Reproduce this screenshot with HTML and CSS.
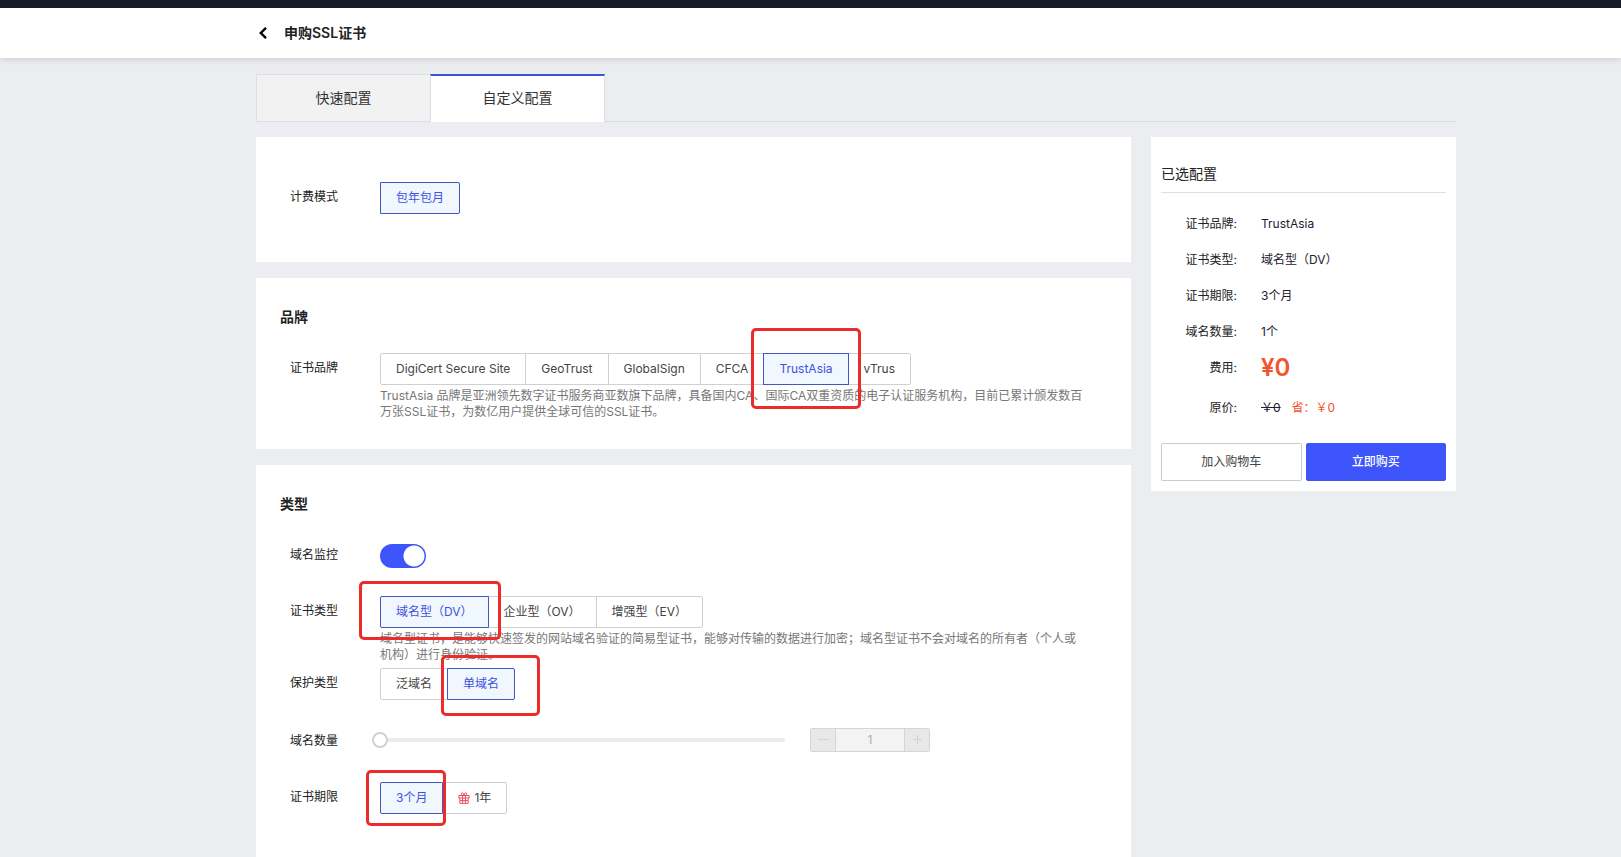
FILE: index.html
```html
<!DOCTYPE html>
<html lang="zh-CN">
<head>
<meta charset="utf-8">
<meta name="viewport" content="width=device-width, initial-scale=1">
<title>申购SSL证书</title>
<link rel="stylesheet" href="styles.css">
</head>
<body>
<header class="header">
  <a class="back" href="#" aria-label="返回"><svg width="10" height="12" viewBox="0 0 10 12"><path d="M8 .8L2.800 6 8 11.200" fill="none" stroke="currentColor" stroke-width="2.4"/></svg></a>
  <h1 class="title">申购SSL证书</h1>
</header>
<div class="page">
  <nav class="tabs">
    <button class="tab" type="button">快速配置</button>
    <button class="tab tab-active" type="button">自定义配置</button>
  </nav>
  <div class="columns">
    <main class="main">
      <section class="card card-billing">
        <div class="row">
          <span class="label">计费模式</span>
          <div class="options">
            <label class="option"><input type="radio" name="billing" checked><span>包年包月</span></label>
          </div>
        </div>
      </section>
      <section class="card card-brand">
        <h2 class="heading">品牌</h2>
        <div class="row">
          <span class="label">证书品牌</span>
          <div class="field">
            <div class="options">
              <label class="option"><input type="radio" name="brand"><span>DigiCert Secure Site</span></label>
              <label class="option"><input type="radio" name="brand"><span>GeoTrust</span></label>
              <label class="option"><input type="radio" name="brand"><span>GlobalSign</span></label>
              <label class="option"><input type="radio" name="brand"><span>CFCA</span></label>
              <label class="option"><input type="radio" name="brand" checked><span>TrustAsia</span><i class="mark mark-brand"></i></label>
              <label class="option"><input type="radio" name="brand"><span>vTrus</span></label>
            </div>
            <p class="hint">TrustAsia 品牌是亚洲领先数字证书服务商亚数旗下品牌，具备国内CA、国际CA双重资质的电子认证服务机构，目前已累计颁发数百万张SSL证书，为数亿用户提供全球可信的SSL证书。</p>
          </div>
        </div>
      </section>
      <section class="card card-type">
        <h2 class="heading">类型</h2>
        <div class="row">
          <label class="label" for="monitor">域名监控</label>
          <input class="switch" id="monitor" type="checkbox" checked>
        </div>
        <div class="row row-tight">
          <span class="label">证书类型</span>
          <div class="field">
            <div class="options">
              <label class="option"><input type="radio" name="type" checked><span>域名型（DV）</span><i class="mark mark-type"></i></label>
              <label class="option"><input type="radio" name="type"><span>企业型（OV）</span></label>
              <label class="option"><input type="radio" name="type"><span>增强型（EV）</span></label>
            </div>
            <p class="hint">域名型证书，是能够快速签发的网站域名验证的简易型证书，能够对传输的数据进行加密；域名型证书不会对域名的所有者（个人或机构）进行身份验证。</p>
          </div>
        </div>
        <div class="row">
          <span class="label">保护类型</span>
          <div class="options">
            <label class="option"><input type="radio" name="protect"><span>泛域名</span></label>
            <label class="option"><input type="radio" name="protect" checked><span>单域名</span><i class="mark mark-protect"></i></label>
          </div>
        </div>
        <div class="row">
          <label class="label" for="count">域名数量</label>
          <div class="amount">
            <input class="slider" id="count" type="range" min="1" max="100" value="1" disabled>
            <div class="stepper">
              <button type="button" aria-label="减少" disabled><svg width="10" height="10" viewBox="0 0 10 10"><path d="M0 4.500h10" stroke="currentColor" fill="none"/></svg></button>
              <input type="text" value="1" aria-label="域名数量" disabled>
              <button type="button" aria-label="增加" disabled><svg width="10" height="10" viewBox="0 0 10 10"><path d="M1 4.500h9M5.500 0v9" stroke="currentColor" fill="none"/></svg></button>
            </div>
          </div>
        </div>
        <div class="row">
          <span class="label">证书期限</span>
          <div class="options">
            <label class="option"><input type="radio" name="period" checked><span>3个月</span><i class="mark mark-period"></i></label>
            <label class="option option-gift"><input type="radio" name="period"><svg class="gift" width="12" height="12" viewBox="0 0 12 12"><path d="M.8 3.500h10.400v2.500H.8zM1.800 6v5.300h8.400V6M4.600 3.500v7.800M7.400 3.500v7.800M6 3.500C4.800 3.500 2.900 3 3.300 1.500 3.800.1 5.800.7 6 3.500 6.200.7 8.200.1 8.700 1.500 9.100 3 7.200 3.500 6 3.500zM2 8.600h8" fill="none" stroke="currentColor" stroke-width=".9"/></svg><span>1年</span></label>
          </div>
        </div>
      </section>
    </main>
    <aside class="card summary">
      <h2 class="summary-title">已选配置</h2>
      <dl class="facts">
        <dt>证书品牌:</dt><dd>TrustAsia</dd>
        <dt>证书类型:</dt><dd>域名型（DV）</dd>
        <dt>证书期限:</dt><dd>3个月</dd>
        <dt>域名数量:</dt><dd>1个</dd>
        <dt>费用:</dt><dd class="price">¥0</dd>
        <dt class="tall">原价:</dt><dd class="tall"><s>￥0</s><span class="saving">省：￥0</span></dd>
      </dl>
      <div class="actions">
        <button class="action" type="button">加入购物车</button>
        <button class="action action-primary" type="button">立即购买</button>
      </div>
    </aside>
  </div>
</div>
</body>
</html>
```
FILE: styles.css
```css
* { box-sizing: border-box; }
body, h1, h2, p, dl, dd { margin: 0; }
body {
  background: #ecedf1;
  color: #222;
  font: 12px/16px Inter, "Noto Sans CJK SC", sans-serif;
  overflow: hidden;
}
button, input { font: inherit; margin: 0; }

.header {
  display: flex;
  align-items: center;
  gap: 16px;
  height: 58px;
  padding-left: 258px;
  border-top: 8px solid #171a28;
  background: #fff;
  box-shadow: 0 2px 6px rgba(0, 0, 0, .12);
}
.back { display: flex; color: #000; }
.title { font-size: 14px; line-height: 20px; font-weight: 600; }

.page { max-width: 1456px; padding: 16px 0 0 256px; }
.tabs { display: flex; height: 48px; border-bottom: 1px solid #d5dbe2; }
.tab {
  width: 174px;
  height: 48px;
  padding: 0;
  border: 1px solid #dcdee0;
  border-right: 0;
  background: #f2f2f2;
  color: #333;
  font-size: 14px;
}
.tab-active {
  width: 175px;
  padding-bottom: 2px;
  border-top: 2px solid #3f51dd;
  border-right: 1px solid #dcdee0;
  border-bottom: 0;
  background: #fff;
}

.columns { display: flex; align-items: flex-start; gap: 20px; margin-top: 15px; }
.main { flex: 1; display: grid; gap: 16px; }
.card { background: #fff; }
.card-billing { padding: 45px 24px 48px; }
.card-brand { padding: 29px 24px 29px; }
.card-type { padding: 29px 24px 64px; }
.heading { font-size: 14px; line-height: 20px; font-weight: 600; margin-bottom: 26px; }

.row { display: flex; align-items: flex-start; padding-left: 10px; }
.card-type .row + .row { margin-top: 26px; }
.card-type .row-tight + .row { margin-top: 5px; }
.label { flex: none; width: 90px; line-height: 30px; }
.field { flex: 1; max-width: 706px; }
.hint { margin-top: 3px; color: #777; }

.options { display: flex; }
.option {
  position: relative;
  display: flex;
  align-items: center;
  height: 32px;
  padding: 0 15px;
  border: 1px solid #d0d0d0;
  color: #444;
}
.option + .option { margin-left: -1px; }
.option:first-child { border-radius: 2px 0 0 2px; }
.option:last-child { border-radius: 0 2px 2px 0; }
.option input { position: absolute; opacity: 0; pointer-events: none; }
.option:has(input:checked) {
  z-index: 1;
  border-color: #4455c4;
  background: #f0f7ff;
  color: #3f51dd;
}
.option-gift { gap: 4px; }
.gift { color: #e5405a; }

.mark { position: absolute; border: 3px solid #ec2b2b; border-radius: 5px; pointer-events: none; }
.mark-brand { inset: -26px -13px -25px -13px; }
.mark-type { inset: -16px -13px -13px -22px; }
.mark-protect { inset: -14px -26px -17px -7px; }
.mark-period { inset: -13px -4px -13px -15px; }

.switch {
  appearance: none;
  width: 46px;
  height: 24px;
  margin-top: 4px;
  border-radius: 12px;
  background: radial-gradient(circle at 34px 12px, #fff 10px, #3d55fb 11px);
}

.amount { flex: 1; display: flex; align-items: center; gap: 25px; height: 28px; margin-left: -8px; }
.slider { appearance: none; width: 413px; height: 16px; background: none; }
.slider::-webkit-slider-runnable-track { height: 4px; border-radius: 2px; background: #ececec; }
.slider::-webkit-slider-thumb {
  appearance: none;
  width: 16px;
  height: 16px;
  margin-top: -6px;
  border: 2px solid #d2d2d2;
  border-radius: 50%;
  background: #fff;
}
.stepper { display: flex; width: 120px; height: 24px; border: 1px solid #d5d5d5; border-radius: 2px; }
.stepper button {
  display: flex;
  align-items: center;
  justify-content: center;
  width: 24px;
  padding: 0;
  border: 0;
  background: #e8e8e8;
  color: #d0d0d0;
}
.stepper input {
  flex: 1;
  min-width: 0;
  padding: 0;
  border: solid #d5d5d5;
  border-width: 0 1px;
  background: #f3f3f3;
  color: #b0b0b0;
  text-align: center;
}

.summary { width: 305px; padding: 24px 10px 10px; }
.summary-title { padding: 3px 0 8px; border-bottom: 1px solid #dcdedf; font-size: 14px; line-height: 20px; font-weight: 400; }
.facts { display: grid; grid-template-columns: 76px 1fr; column-gap: 24px; padding: 13px 0; line-height: 36px; }
.facts dt { text-align: right; }
.facts dd { color: #1c2033; }
.facts .price { color: #f4532f; font-size: 24px; font-weight: 600; }
.facts .tall { line-height: 44px; }
.facts .saving { margin-left: 11px; color: #f4532f; }
.actions { display: flex; gap: 4px; }
.action { flex: 1; height: 38px; padding: 0; border: 1px solid #ccc; border-radius: 2px; background: #fff; color: #444; }
.action-primary { border-color: #3d55fb; background: #3d55fb; color: #fff; font-weight: 500; }
```
